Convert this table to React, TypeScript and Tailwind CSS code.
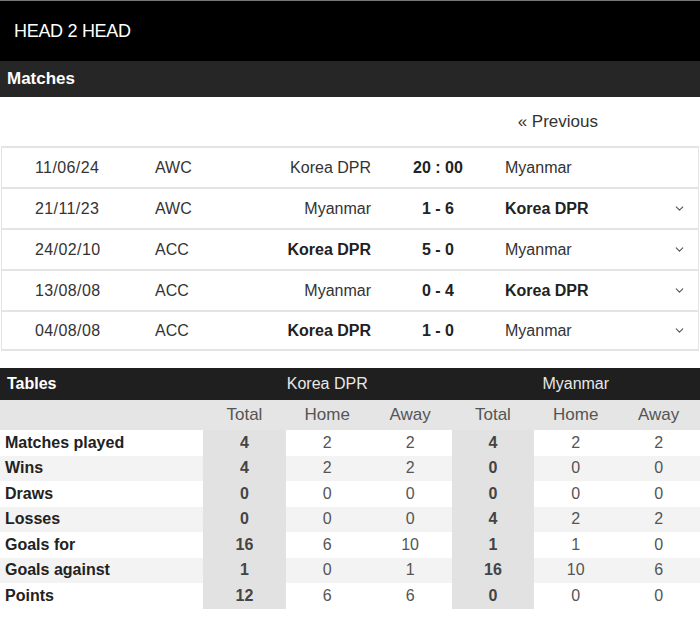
import React from "react";
import { ChevronDown } from "lucide-react";

type Match = {
  date: string;
  comp: string;
  home: string;
  score: string;
  away: string;
  winner: "home" | "away" | null;
  expand: boolean;
};

const matches: Match[] = [
  { date: "11/06/24", comp: "AWC", home: "Korea DPR", score: "20 : 00", away: "Myanmar", winner: null, expand: false },
  { date: "21/11/23", comp: "AWC", home: "Myanmar", score: "1 - 6", away: "Korea DPR", winner: "away", expand: true },
  { date: "24/02/10", comp: "ACC", home: "Korea DPR", score: "5 - 0", away: "Myanmar", winner: "home", expand: true },
  { date: "13/08/08", comp: "ACC", home: "Myanmar", score: "0 - 4", away: "Korea DPR", winner: "away", expand: true },
  { date: "04/08/08", comp: "ACC", home: "Korea DPR", score: "1 - 0", away: "Myanmar", winner: "home", expand: true },
];

const stats: [string, number[]][] = [
  ["Matches played", [4, 2, 2, 4, 2, 2]],
  ["Wins", [4, 2, 2, 0, 0, 0]],
  ["Draws", [0, 0, 0, 0, 0, 0]],
  ["Losses", [0, 0, 0, 4, 2, 2]],
  ["Goals for", [16, 6, 10, 1, 1, 0]],
  ["Goals against", [1, 0, 1, 16, 10, 6]],
  ["Points", [12, 6, 6, 0, 0, 0]],
];

export default function App() {
  return (
    <div className="w-[700px] h-[617px] bg-white font-['Liberation_Sans',Arial,sans-serif] text-[#333] overflow-hidden">
      {/* Title */}
      <div className="h-[61px] bg-black border-t border-[#777] flex items-center pl-[14px]">
        <span className="text-white text-[18px] tracking-[-0.3px]">HEAD 2 HEAD</span>
      </div>

      {/* Matches */}
      <div className="h-[36px] bg-[#262626] flex items-center pl-[7px]">
        <span className="text-white text-[17px] font-bold">Matches</span>
      </div>
      <div className="h-[49px] flex items-center justify-end pr-[102px]">
        <span className="text-[17px] text-[#333]">« Previous</span>
      </div>

      <div className="px-[1px]">
        {matches.map((m) => (
          <div
            key={m.date}
            className="h-[41px] flex items-center border-t-2 border-x border-[#e4e4e4] last:border-b-2 text-[16px]"
          >
            <div className="w-[153px] pl-[33px] tracking-[0.4px]">{m.date}</div>
            <div className="w-[80px]">{m.comp}</div>
            <div className={`w-[136px] text-right ${m.winner === "home" ? "font-bold text-[#222]" : ""}`}>{m.home}</div>
            <div className="w-[134px] text-center font-bold text-[#222]">{m.score}</div>
            <div className={`flex-1 ${m.winner === "away" ? "font-bold text-[#222]" : ""}`}>{m.away}</div>
            <div className="w-[34px] flex justify-center pr-[4px]">
              {m.expand && <ChevronDown size={13} strokeWidth={2} className="text-[#555]" />}
            </div>
          </div>
        ))}
      </div>

      {/* Tables */}
      <div className="mt-[17px] h-[32px] bg-[#1f1f1f] grid grid-cols-[203px_1fr_1fr] items-center">
        <span className="pl-[7px] text-white text-[16px] font-bold">Tables</span>
        <span className="text-center text-[#e8e8e8] text-[16px]">Korea DPR</span>
        <span className="text-center text-[#e8e8e8] text-[16px]">Myanmar</span>
      </div>
      <div className="h-[30px] bg-[#e5e5e5] grid grid-cols-[203px_repeat(6,1fr)] items-center text-[17px] text-[#555]">
        <span />
        {["Total", "Home", "Away", "Total", "Home", "Away"].map((h, i) => (
          <span key={i} className="text-center">{h}</span>
        ))}
      </div>
      {stats.map(([label, vals], r) => (
        <div
          key={label}
          className={`h-[25.5px] grid grid-cols-[203px_repeat(6,1fr)] items-stretch text-[16px] ${r % 2 === 1 ? "bg-[#f3f3f3]" : "bg-white"}`}
        >
          <span className="pl-[5px] font-bold text-[#222] flex items-center">{label}</span>
          {vals.map((v, i) => (
            <span
              key={i}
              className={`flex items-center justify-center ${i % 3 === 0 ? "bg-[#e2e2e2] font-bold text-[#444]" : "text-[#555]"}`}
            >
              {v}
            </span>
          ))}
        </div>
      ))}
    </div>
  );
}
